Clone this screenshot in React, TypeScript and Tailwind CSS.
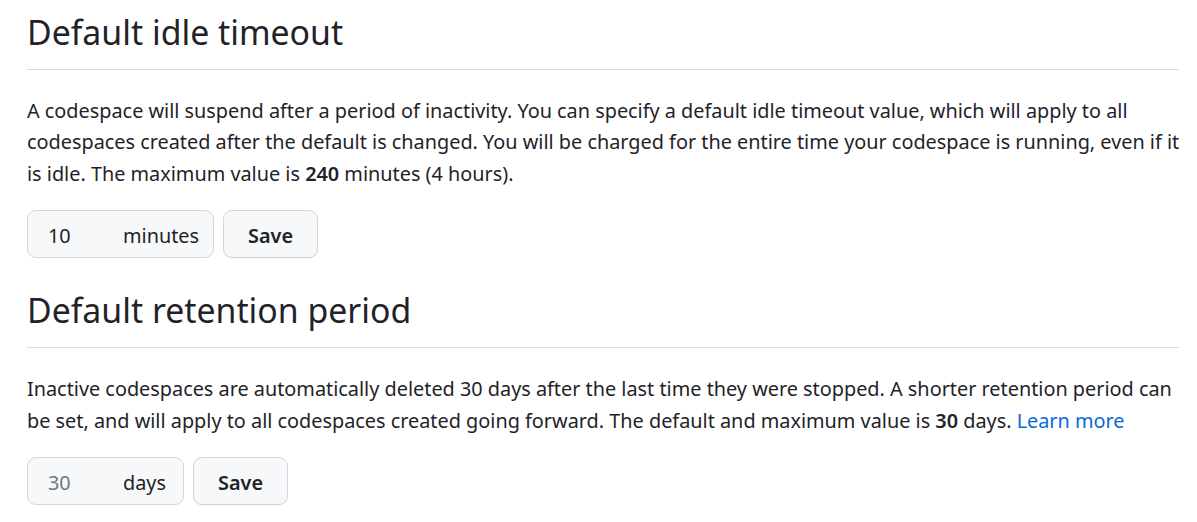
import React from 'react';

interface SettingSectionProps {
  title: string;
  children: React.ReactNode;
  value?: string;
  placeholder?: string;
  unit: string;
  boxClass: string;
  className?: string;
}

function SettingSection({ title, children, value, placeholder, unit, boxClass, className }: SettingSectionProps) {
  return (
    <section className={className}>
      <h2 className="border-b border-[#d8dee4] pb-[14px] text-[33.8px] font-normal leading-[45px]">
        {title}
      </h2>
      <p className="mt-[25px] mr-[-6px] text-[19.85px] leading-[31.5px]">{children}</p>
      <form className="mt-[21px] flex gap-[9px]" onSubmit={(e) => e.preventDefault()}>
        <div
          className={`flex h-[48px] items-center rounded-[9px] border border-[#d0d7de] bg-[#f6f8fa] pt-[3px] ${boxClass}`}
        >
          <input
            type="text"
            defaultValue={value}
            placeholder={placeholder}
            className="w-[95px] bg-transparent pl-[20px] text-[19.85px] text-[#1f2328] outline-none placeholder:text-[#6e7781]"
          />
          <span className="text-[19.85px]">{unit}</span>
        </div>
        <button
          type="submit"
          className="h-[48px] w-[95px] rounded-[9px] border border-[#d0d7de] bg-[#f6f8fa] pt-[3px] text-[19.85px] font-semibold shadow-[0_1px_0_rgba(31,35,40,0.04)]"
        >
          Save
        </button>
      </form>
    </section>
  );
}

export default function App() {
  return (
    <div className="min-h-[522px] bg-white pl-[27px] pr-[18px] pt-[9.5px] font-['Noto_Sans',sans-serif] text-[#1f2328]">
      <SettingSection title="Default idle timeout" value="10" unit="minutes" boxClass="w-[187px]">
        A codespace will suspend after a period of inactivity. You can specify a default idle timeout value, which
        will apply to all codespaces created after the default is changed. You will be charged for the entire time
        your codespace is running, even if it is idle. The maximum value is <strong className="font-semibold">240</strong>{' '}
        minutes (4 hours).
      </SettingSection>
      <SettingSection
        title="Default retention period"
        placeholder="30"
        unit="days"
        boxClass="w-[157px]"
        className="mt-[30px]"
      >
        Inactive codespaces are automatically deleted 30 days after the last time they were stopped. A shorter
        retention period can be set, and will apply to all codespaces created going forward. The default and maximum
        value is <strong className="font-semibold">30</strong> days.{' '}
        <a href="#" className="text-[#0969da]">
          Learn more
        </a>
      </SettingSection>
    </div>
  );
}
